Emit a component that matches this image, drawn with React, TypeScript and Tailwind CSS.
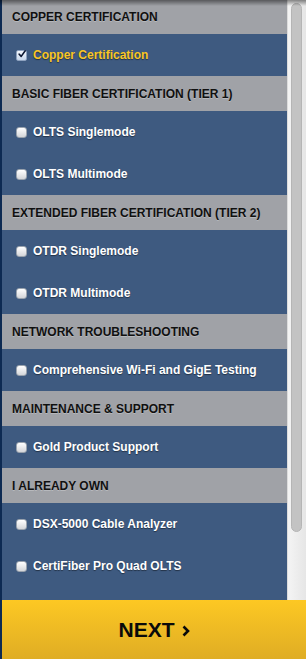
import React from "react";

type Item = { label: string; checked?: boolean };
type Section = { title: string; items: Item[]; first?: boolean };

const sections: Section[] = [
  { title: "COPPER CERTIFICATION", items: [{ label: "Copper Certification", checked: true }], first: true },
  { title: "BASIC FIBER CERTIFICATION (TIER 1)", items: [{ label: "OLTS Singlemode" }, { label: "OLTS Multimode" }] },
  { title: "EXTENDED FIBER CERTIFICATION (TIER 2)", items: [{ label: "OTDR Singlemode" }, { label: "OTDR Multimode" }] },
  { title: "NETWORK TROUBLESHOOTING", items: [{ label: "Comprehensive Wi-Fi and GigE Testing" }] },
  { title: "MAINTENANCE & SUPPORT", items: [{ label: "Gold Product Support" }] },
  { title: "I ALREADY OWN", items: [{ label: "DSX-5000 Cable Analyzer" }, { label: "CertiFiber Pro Quad OLTS" }] },
];

function Checkbox({ checked }: { checked?: boolean }) {
  if (checked) {
    return (
      <div className="w-[11px] h-[11px] rounded-[2px] border border-[#8fa3c0] bg-gradient-to-b from-[#f4f8fd] to-[#c9d8ec] flex items-center justify-center shrink-0">
        <svg width="10" height="10" viewBox="0 0 10 10" className="-mt-[2px] ml-[1px]">
          <path d="M1.5 5.2 L4 8 L9 1" fill="none" stroke="#0b1630" strokeWidth="2" strokeLinecap="round" strokeLinejoin="round" />
        </svg>
      </div>
    );
  }
  return (
    <div className="w-[11px] h-[11px] rounded-[3px] border border-[#9aa3ae] bg-gradient-to-b from-[#ffffff] to-[#d4d6da] shrink-0" />
  );
}

export default function App() {
  return (
    <div
      className="relative w-[306px] h-[659px] flex flex-col bg-[#0d2a52] overflow-hidden"
      style={{ fontFamily: '"Liberation Sans", Arial, Helvetica, sans-serif' }}
    >
      <div className="flex h-[600px] pl-[2px]">
        <div className="w-[285px] flex flex-col bg-[#3e5a80]">
          {sections.map((s) => (
            <div key={s.title} className="flex flex-col">
              <div
                className={`${s.first ? "h-[34px]" : "h-[35px]"} bg-[#a0a2a7] flex items-center pl-[10px] text-[12px] font-bold text-[#101010] leading-none`}
                style={{ textShadow: "0 1px 0 rgba(255,255,255,0.25)" }}
              >
                {s.title}
              </div>
              {s.items.map((it) => (
                <div key={it.label} className="h-[42px] flex items-center pl-[14px] gap-[6px]">
                  <Checkbox checked={it.checked} />
                  <span
                    className={`text-[12px] font-bold leading-none -mt-[1px] ${it.checked ? "text-[#f9c623]" : "text-white"}`}
                    style={{ textShadow: "0 1px 1px rgba(0,0,0,0.45)" }}
                  >
                    {it.label}
                  </span>
                </div>
              ))}
            </div>
          ))}
        </div>
        <div className="w-[19px] bg-gradient-to-r from-[#f4f4f4] to-[#e6e6e6] border-l border-[#dcdcdc] flex pt-[3px] pl-[3px]">
          <div className="w-[11px] h-[529px] rounded-full bg-[#c3c3c3] border border-[#b5b5b5]" />
        </div>
      </div>
      <div className="h-[59px] ml-[2px] bg-gradient-to-b from-[#fdc823] to-[#dfad24] flex items-center justify-center gap-[7px]">
        <span className="text-[21px] font-bold text-[#0a0a0a] leading-none">NEXT</span>
        <svg width="8" height="12" viewBox="0 0 8 12" className="mt-[2px]">
          <path d="M1.5 1.5 L6 6 L1.5 10.5" fill="none" stroke="#0a0a0a" strokeWidth="2.6" />
        </svg>
      </div>
      <div className="pointer-events-none absolute top-0 left-0 right-0 h-[6px] bg-gradient-to-b from-[rgba(0,0,0,0.45)] to-transparent" />
    </div>
  );
}
